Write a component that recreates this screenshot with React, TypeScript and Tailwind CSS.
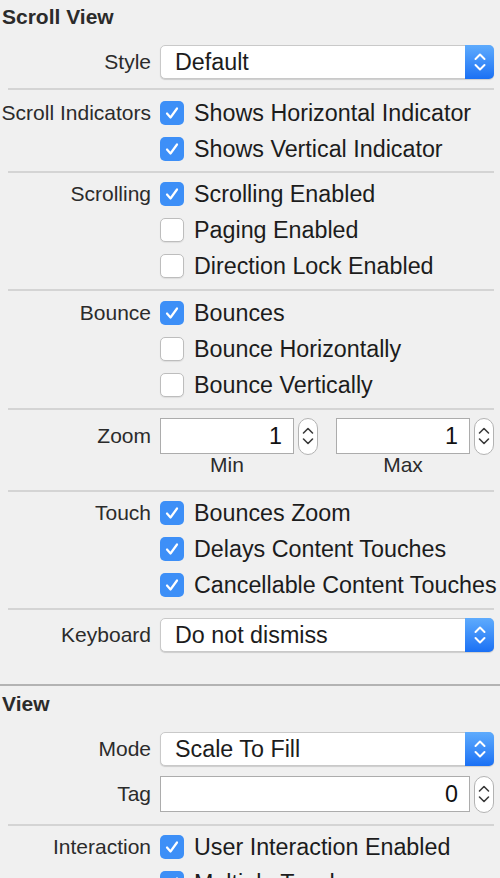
import type { ReactNode } from "react";

function Check({ checked }: { checked: boolean }) {
  if (!checked) {
    return <span className="block h-[24px] w-[24px] shrink-0 rounded-[5px] border border-[#bdbdbd] bg-white shadow-[0_1px_1px_rgba(0,0,0,0.08)]" />;
  }
  return (
    <span className="flex h-[24px] w-[24px] shrink-0 items-center justify-center rounded-[5px] bg-[#3d8ff7]">
      <svg width="16" height="16" viewBox="0 0 16 16" fill="none">
        <polyline points="3,8.5 6.5,12.5 13,3.5" stroke="white" strokeWidth="2.2" strokeLinecap="round" strokeLinejoin="round" />
      </svg>
    </span>
  );
}

function Chevrons({ color, width }: { color: string; width: number }) {
  return (
    <svg width="14" height="24" viewBox="0 0 14 24" fill="none">
      <polyline points="2.5,9 7,4.5 11.5,9" stroke={color} strokeWidth={width} strokeLinecap="round" strokeLinejoin="round" />
      <polyline points="2.5,15 7,19.5 11.5,15" stroke={color} strokeWidth={width} strokeLinecap="round" strokeLinejoin="round" />
    </svg>
  );
}

function Select({ value }: { value: string }) {
  return (
    <div className="flex h-[34px] w-[334px] rounded-[5px] border border-[#c9c9c9] bg-white shadow-[0_1px_1px_rgba(0,0,0,0.15)]">
      <span className="flex flex-1 items-center pl-[14px] text-[23.3px] text-[#1c1c1c]">{value}</span>
      <span className="-my-px -mr-px flex w-[29px] items-center justify-center rounded-r-[5px] bg-gradient-to-b from-[#5eabfd] to-[#1a70f4]">
        <Chevrons color="white" width={2} />
      </span>
    </div>
  );
}

function Stepper() {
  return (
    <span className="flex h-[37px] w-[20px] items-center justify-center rounded-full border border-[#b3b3b3] bg-white">
      <Chevrons color="#3a3a3a" width={1.6} />
    </span>
  );
}

function NumberField({ value, width }: { value: string; width: string }) {
  return (
    <div className="flex items-center gap-[4px]">
      <span className={`flex h-[36px] items-center justify-end border border-[#acacac] bg-white pr-[11px] text-[23.3px] text-[#111] ${width}`}>
        {value}
      </span>
      <Stepper />
    </div>
  );
}

function Row({ label, children }: { label?: string; children: ReactNode }) {
  return (
    <div className="flex h-[36px] items-center">
      <span className="w-[151px] shrink-0 whitespace-nowrap text-right text-[21px] text-[#2b2b2b]">{label}</span>
      <div className="ml-[9px] flex items-center">{children}</div>
    </div>
  );
}

function CheckRow({ label, text, checked }: { label?: string; text: string; checked: boolean }) {
  return (
    <Row label={label}>
      <Check checked={checked} />
      <span className="ml-[10px] whitespace-nowrap text-[23.3px] text-[#1c1c1c]">{text}</span>
    </Row>
  );
}

function Divider() {
  return <div className="ml-[8px] mr-[6px] h-[2px] bg-[#d4d4d4]" />;
}

export default function App() {
  return (
    <div className="h-[878px] w-[500px] overflow-hidden bg-[#f0f0f0] font-['Liberation_Sans',Arial,sans-serif]">
      <div className="flex h-[34px] items-center pl-[2px] text-[21px] font-bold text-[#2b2b2b]">Scroll View</div>
      <div className="pb-[8px] pt-[10px]">
        <Row label="Style">
          <Select value="Default" />
        </Row>
      </div>
      <Divider />
      <div className="pb-[4px] pt-[5px]">
        <CheckRow label="Scroll Indicators" text="Shows Horizontal Indicator" checked />
        <CheckRow text="Shows Vertical Indicator" checked />
      </div>
      <Divider />
      <div className="pb-[5px] pt-[3px]">
        <CheckRow label="Scrolling" text="Scrolling Enabled" checked />
        <CheckRow text="Paging Enabled" checked={false} />
        <CheckRow text="Direction Lock Enabled" checked={false} />
      </div>
      <Divider />
      <div className="pb-[5px] pt-[4px]">
        <CheckRow label="Bounce" text="Bounces" checked />
        <CheckRow text="Bounce Horizontally" checked={false} />
        <CheckRow text="Bounce Vertically" checked={false} />
      </div>
      <Divider />
      <div className="pb-[14px] pt-[8px]">
        <Row label="Zoom">
          <NumberField value="1" width="w-[134px]" />
          <div className="ml-[18px]">
            <NumberField value="1" width="w-[134px]" />
          </div>
        </Row>
        <div className="flex h-[22px] items-center pl-[160px] text-[21px] text-[#2b2b2b]">
          <span className="w-[134px] text-center">Min</span>
          <span className="ml-[42px] w-[134px] text-center">Max</span>
        </div>
      </div>
      <Divider />
      <div className="pb-[5px] pt-[3px]">
        <CheckRow label="Touch" text="Bounces Zoom" checked />
        <CheckRow text="Delays Content Touches" checked />
        <CheckRow text="Cancellable Content Touches" checked />
      </div>
      <Divider />
      <div className="pb-[31px] pt-[7px]">
        <Row label="Keyboard">
          <Select value="Do not dismiss" />
        </Row>
      </div>
      <div className="h-[2px] bg-[#b3b3b3]" />
      <div className="flex h-[36px] items-center pl-[2px] text-[21px] font-bold text-[#2b2b2b]">View</div>
      <div className="pt-[9px]">
        <Row label="Mode">
          <Select value="Scale To Fill" />
        </Row>
      </div>
      <div className="pb-[12px] pt-[9px]">
        <Row label="Tag">
          <NumberField value="0" width="w-[310px]" />
        </Row>
      </div>
      <Divider />
      <div className="pt-[3px]">
        <CheckRow label="Interaction" text="User Interaction Enabled" checked />
        <CheckRow text="Multiple Touch" checked />
      </div>
    </div>
  );
}
